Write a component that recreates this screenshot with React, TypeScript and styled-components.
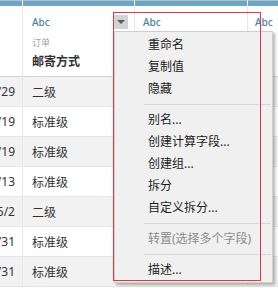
import { Fragment } from 'react';
import styled, { createGlobalStyle } from 'styled-components';

const GlobalStyle = createGlobalStyle`
  html, body {
    margin: 0;
    padding: 0;
    background: #fff;
  }
  body {
    font-family: "Noto Sans", "Noto Sans CJK SC", sans-serif;
    color: #333;
  }
`;

const Frame = styled.div`
  position: relative;
  width: 278px;
  height: 288px;
  overflow: hidden;
  background: #fff;
`;

const Grid = styled.div`
  display: grid;
  grid-template-columns: 23px 112px 113px 40px;
`;

const BarCell = styled.div`
  box-sizing: border-box;
  height: 6px;
  border-top: 1px solid #bdbdbd;
  border-right: 1px solid #fff;
  background: #69a6c8;
`;

const HeadCell = styled.div<{ $pad?: number }>`
  box-sizing: border-box;
  height: 71px;
  padding: 9px 6px 0 ${({ $pad }) => $pad ?? 9}px;
  border-right: 1px solid #e8e8e8;
  border-bottom: 1px solid #d4d4d4;
  display: flex;
  flex-direction: column;
`;

const HeadTop = styled.div`
  display: flex;
  justify-content: space-between;
  align-items: center;
  height: 14px;
`;

const TypeLabel = styled.span`
  font-size: 10px;
  font-weight: 500;
  line-height: 14px;
  color: #4a84a5;
`;

const DropButton = styled.div`
  width: 14px;
  height: 14px;
  background: #d3d3d3;
  display: flex;
  align-items: center;
  justify-content: center;
  &::after {
    content: '';
    border-left: 4px solid transparent;
    border-right: 4px solid transparent;
    border-top: 4px solid #595959;
  }
`;

const Source = styled.div`
  margin-top: 8px;
  font-size: 9px;
  line-height: 12px;
  color: #a3a3a3;
`;

const FieldName = styled.div`
  margin-top: 5px;
  font-size: 12px;
  line-height: 16px;
  font-weight: 700;
  color: #333;
`;

const DataCell = styled.div<{ $shade: boolean; $date?: boolean }>`
  box-sizing: border-box;
  height: 30px;
  display: flex;
  align-items: center;
  justify-content: ${({ $date }) => ($date ? 'flex-end' : 'flex-start')};
  padding: ${({ $date }) => ($date ? '0 7px 0 0' : '0 0 0 9px')};
  overflow: hidden;
  white-space: nowrap;
  font-size: 12px;
  color: #333;
  background: ${({ $shade }) => ($shade ? '#f2f2f2' : '#fff')};
  border-right: 1px solid #e8e8e8;
  border-bottom: 1px solid #e6e6e6;
`;

const Menu = styled.div`
  position: absolute;
  left: 114px;
  top: 31px;
  width: 159px;
  box-sizing: border-box;
  padding: 2px 0 1px;
  background: #f0f0f0;
  border: 1px solid #cfcfcf;
  box-shadow: 2px 2px 3px rgba(0, 0, 0, 0.3);
  display: flex;
  flex-direction: column;
`;

const MenuItem = styled.div<{ $disabled?: boolean }>`
  height: 22px;
  line-height: 22px;
  padding-left: 33px;
  font-size: 12px;
  white-space: nowrap;
  color: ${({ $disabled }) => ($disabled ? '#8c8c8c' : '#1c1c1c')};
`;

const Separator = styled.div`
  height: 1px;
  margin: 4px 1px 4px 29px;
  background: #d6d6d6;
`;

const Highlight = styled.div`
  position: absolute;
  left: 113px;
  top: 12px;
  width: 148px;
  height: 269px;
  box-sizing: border-box;
  border: 1px solid #e8343c;
  pointer-events: none;
`;

const rows = [
  { date: '2017/4/29', ship: '二级' },
  { date: '2017/6/19', ship: '标准级' },
  { date: '2017/6/19', ship: '标准级' },
  { date: '2017/5/13', ship: '标准级' },
  { date: '2017/5/2', ship: '二级' },
  { date: '2017/3/31', ship: '标准级' },
  { date: '2017/3/31', ship: '标准级' },
];

const menu: (string | null)[] = [
  '重命名',
  '复制值',
  '隐藏',
  null,
  '别名...',
  '创建计算字段...',
  '创建组...',
  '拆分',
  '自定义拆分...',
  null,
  '转置(选择多个字段)',
  null,
  '描述...',
];

export default function App() {
  return (
    <Frame>
      <GlobalStyle />
      <Grid>
        <BarCell />
        <BarCell />
        <BarCell />
        <BarCell />

        <HeadCell />
        <HeadCell>
          <HeadTop>
            <TypeLabel>Abc</TypeLabel>
            <DropButton />
          </HeadTop>
          <Source>订单</Source>
          <FieldName>邮寄方式</FieldName>
        </HeadCell>
        <HeadCell $pad={8}>
          <HeadTop>
            <TypeLabel>Abc</TypeLabel>
          </HeadTop>
        </HeadCell>
        <HeadCell $pad={7}>
          <HeadTop>
            <TypeLabel>Abc</TypeLabel>
          </HeadTop>
        </HeadCell>

        {rows.map((r, i) => (
          <Fragment key={i}>
            <DataCell $shade={i % 2 === 0} $date>
              {r.date}
            </DataCell>
            <DataCell $shade={i % 2 === 0}>{r.ship}</DataCell>
            <DataCell $shade={i % 2 === 0} />
            <DataCell $shade={i % 2 === 0} />
          </Fragment>
        ))}
      </Grid>

      <Menu>
        {menu.map((m, i) =>
          m === null ? (
            <Separator key={i} />
          ) : (
            <MenuItem key={i} $disabled={m.startsWith('转置')}>
              {m}
            </MenuItem>
          )
        )}
      </Menu>
      <Highlight />
    </Frame>
  );
}
